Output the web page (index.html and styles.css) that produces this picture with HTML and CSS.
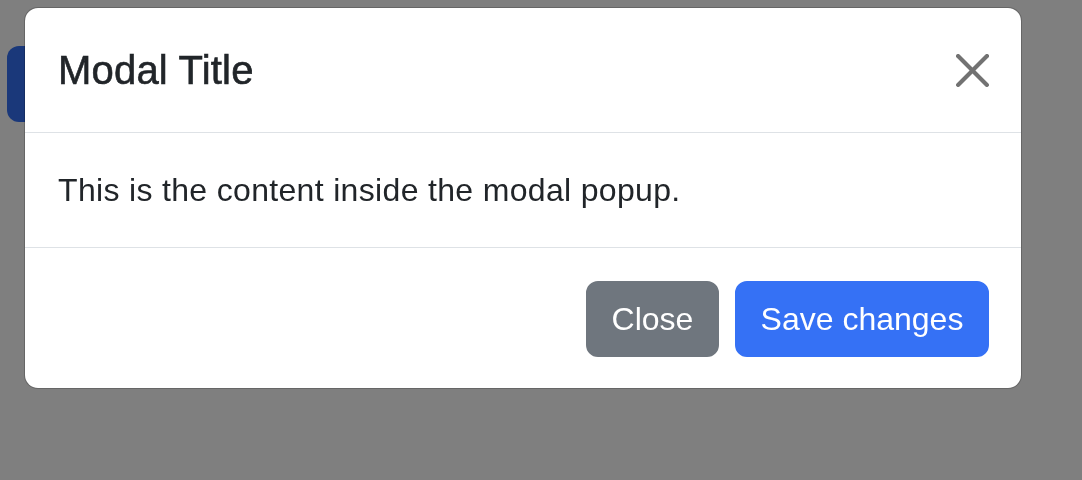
FILE: index.html
```html
<!DOCTYPE html>
<html lang="en">
<head>
<meta charset="utf-8">
<title>Modal</title>
<link rel="stylesheet" href="styles.css">
</head>
<body>
  <button class="launch-btn" type="button" aria-label="Launch demo modal"></button>
  <div class="backdrop"></div>
  <div class="modal" role="dialog" aria-labelledby="modalTitle">
    <div class="modal-header">
      <h5 class="modal-title" id="modalTitle">Modal Title</h5>
      <button class="btn-close" type="button" aria-label="Close">
        <svg viewBox="0 0 16 16" width="33" height="33" aria-hidden="true">
          <path d="M.293.293a1 1 0 0 1 1.414 0L8 6.586 14.293.293a1 1 0 1 1 1.414 1.414L9.414 8l6.293 6.293a1 1 0 0 1-1.414 1.414L8 9.414l-6.293 6.293a1 1 0 0 1-1.414-1.414L6.586 8 .293 1.707a1 1 0 0 1 0-1.414z"/>
        </svg>
      </button>
    </div>
    <div class="modal-body">
      <p>This is the content inside the modal popup.</p>
    </div>
    <div class="modal-footer">
      <button class="btn btn-secondary" type="button">Close</button>
      <button class="btn btn-primary" type="button">Save changes</button>
    </div>
  </div>
</body>
</html>
```

FILE: styles.css
```css
* { box-sizing: border-box; }

html, body {
  margin: 0;
  height: 100%;
}

body {
  background: #ffffff;
  font-family: "Liberation Sans", Arial, sans-serif;
  color: #212529;
  padding: 46px 0 0 7px;
  overflow: hidden;
}

.launch-btn {
  display: block;
  width: 300px;
  height: 76px;
  border: 0;
  border-radius: 12px;
  background: #3571f5;
}

.backdrop {
  position: fixed;
  inset: 0;
  background: rgba(0, 0, 0, 0.5);
}

.modal {
  position: fixed;
  left: 24px;
  top: 7px;
  width: 998px;
  background: #fff;
  background-clip: padding-box;
  border: 1px solid rgba(0, 0, 0, 0.2);
  border-radius: 14px;
  display: flex;
  flex-direction: column;
}

.modal-header {
  height: 125px;
  display: flex;
  align-items: center;
  justify-content: space-between;
  padding: 0 32px 0 33px;
  border-bottom: 1px solid #dee2e6;
}

.modal-title {
  margin: 0;
  font-size: 40px;
  font-weight: 400;
  line-height: 48px;
  color: #212529;
  -webkit-text-stroke: 0.6px #212529;
  letter-spacing: 0.2px;
}

.btn-close {
  display: flex;
  padding: 0;
  border: 0;
  background: transparent;
  margin-top: 1px;
}

.btn-close svg {
  display: block;
  fill: #000;
  opacity: 0.55;
}

.modal-body {
  padding: 32px 33px 32px 33px;
  border-bottom: 1px solid #dee2e6;
}

.modal-body p {
  margin: 0;
  font-size: 32px;
  line-height: 50px;
  letter-spacing: 0.33px;
}

.modal-footer {
  display: flex;
  justify-content: flex-end;
  align-items: center;
  gap: 16px;
  padding: 33px 32px 31px;
}

.btn {
  height: 76px;
  padding: 0 22px;
  border: 2px solid transparent;
  border-radius: 12px;
  font-family: inherit;
  font-size: 32px;
  line-height: 48px;
  color: #fff;
  white-space: nowrap;
  text-align: center;
}

.btn-secondary {
  background: #6f767e;
  border-color: #6f767e;
  width: 133px;
}

.btn-primary {
  background: #3571f5;
  border-color: #3571f5;
  width: 254px;
}
```
